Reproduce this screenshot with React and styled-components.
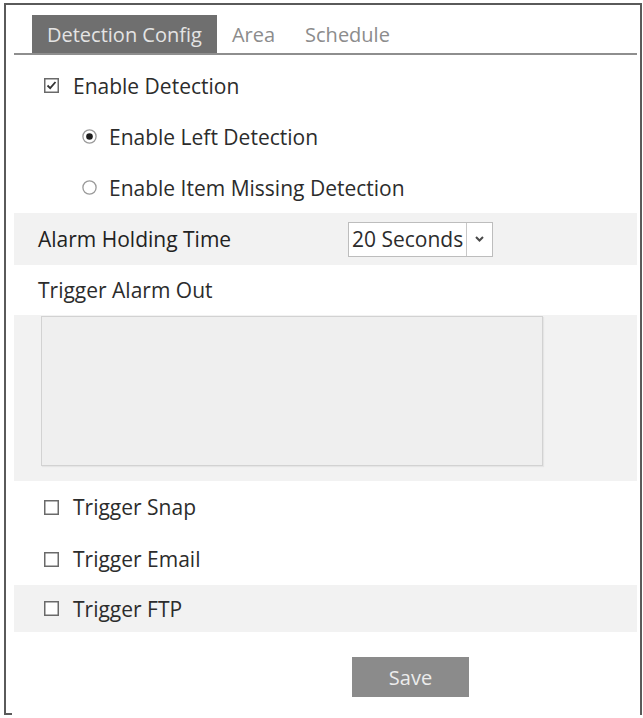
import styled, { createGlobalStyle } from "styled-components";

const GlobalStyle = createGlobalStyle`
  html, body {
    margin: 0;
    padding: 0;
    background: #fff;
  }
  body {
    font-family: "Open Sans", "Noto Sans", sans-serif;
    color: #2c2c2c;
  }
`;

const Frame = styled.div`
  box-sizing: border-box;
  display: flex;
  flex-direction: column;
  width: 638px;
  height: 712px;
  margin: 3px 0 0 4px;
  padding: 0 3px 0 8px;
  border: 2px solid #5a5a5a;
  border-bottom: none;
`;

const TabBar = styled.div`
  display: flex;
  align-items: stretch;
  margin-top: 10px;
  padding-left: 18px;
  border-bottom: 2px solid #8e8e8e;
`;

const Tab = styled.div`
  height: 38px;
  display: flex;
  align-items: center;
  padding: 0 15px;
  font-size: 20px;
  color: ${({ active }) => (active ? "#e4e4e4" : "#8c8c8c")};
  background: ${({ active }) => (active ? "#6f6f6f" : "transparent")};
`;

const Row = styled.div`
  display: flex;
  align-items: center;
  height: ${({ h }) => h || 51}px;
  padding-left: ${({ indent }) => indent || 0}px;
  background: ${({ shaded }) => (shaded ? "#f2f2f2" : "transparent")};
  font-size: 21px;
  color: #2c2c2c;
`;

const FirstRow = styled(Row)`
  margin-top: 5px;
`;

const Label = styled.span`
  white-space: nowrap;
  margin-left: ${({ gap }) => gap || 0}px;
`;

const FieldLabel = styled.span`
  width: 310px;
  white-space: nowrap;
  color: #222;
  font-weight: 500;
`;

const Select = styled.div`
  box-sizing: border-box;
  display: flex;
  width: 145px;
  height: 35px;
  border: 1px solid #bdbdbd;
  background: #fff;
`;

const SelectValue = styled.div`
  flex: 1;
  display: flex;
  align-items: center;
  padding-left: 3px;
  font-size: 21px;
  color: #2c2c2c;
  white-space: nowrap;
  overflow: hidden;
`;

const SelectArrow = styled.div`
  width: 25px;
  display: flex;
  align-items: center;
  justify-content: center;
  border-left: 1px solid #c8c8c8;
`;

const AlarmBand = styled.div`
  padding: 1px 0 15px 27px;
  background: #f2f2f2;
`;

const AlarmList = styled.div`
  box-sizing: border-box;
  width: 502px;
  height: 150px;
  background: #efefef;
  border: 1px solid #d2d2d2;
  box-shadow: 1px 1px 1px rgba(0, 0, 0, 0.05);
`;

const Footer = styled.div`
  display: flex;
  padding-left: 338px;
  margin-top: 25px;
`;

const SaveButton = styled.button`
  width: 117px;
  height: 40px;
  border: none;
  background: #8b8b8b;
  color: #ececec;
  font-family: "Open Sans", "Noto Sans", sans-serif;
  font-size: 20px;
  padding: 0;
`;

const Foot = styled.div`
  margin-top: auto;
  margin-left: -10px;
  width: 8px;
  height: 2px;
  background: #5a5a5a;
`;

function CheckBox({ checked }) {
  return (
    <svg width="15" height="15" viewBox="0 0 15 15" style={{ flexShrink: 0 }}>
      <rect x="0.75" y="0.75" width="13.5" height="13.5" fill="#fff" stroke="#6a6a6a" strokeWidth="1.5" />
      {checked && (
        <polyline points="3.5,7.5 6.2,10.2 11.5,4" fill="none" stroke="#333" strokeWidth="1.8" />
      )}
    </svg>
  );
}

function Radio({ checked }) {
  return (
    <svg width="15" height="15" viewBox="0 0 15 15" style={{ flexShrink: 0 }}>
      <circle cx="7.5" cy="7.5" r="6.6" fill="#fff" stroke="#9a9a9a" strokeWidth="1.3" />
      {checked && <circle cx="7.5" cy="7.5" r="3.3" fill="#1e1e1e" />}
    </svg>
  );
}

function Chevron() {
  return (
    <svg width="9" height="6" viewBox="0 0 9 6">
      <polyline points="1,1 4.5,4.5 8,1" fill="none" stroke="#4a4a4a" strokeWidth="2" />
    </svg>
  );
}

export default function App() {
  return (
    <>
      <GlobalStyle />
      <Frame>
        <TabBar>
          <Tab active>Detection Config</Tab>
          <Tab>Area</Tab>
          <Tab>Schedule</Tab>
        </TabBar>

        <FirstRow indent={30}>
          <CheckBox checked />
          <Label gap={14}>Enable Detection</Label>
        </FirstRow>
        <Row indent={68}>
          <Radio checked />
          <Label gap={12}>Enable Left Detection</Label>
        </Row>
        <Row indent={68}>
          <Radio />
          <Label gap={12}>Enable Item Missing Detection</Label>
        </Row>

        <Row shaded h={52} indent={24}>
          <FieldLabel>Alarm Holding Time</FieldLabel>
          <Select>
            <SelectValue>20 Seconds</SelectValue>
            <SelectArrow>
              <Chevron />
            </SelectArrow>
          </Select>
        </Row>

        <Row h={50} indent={24}>
          <Label>Trigger Alarm Out</Label>
        </Row>
        <AlarmBand>
          <AlarmList />
        </AlarmBand>

        <Row h={52} indent={30}>
          <CheckBox />
          <Label gap={14}>Trigger Snap</Label>
        </Row>
        <Row h={52} indent={30}>
          <CheckBox />
          <Label gap={14}>Trigger Email</Label>
        </Row>
        <Row shaded h={47} indent={30}>
          <CheckBox />
          <Label gap={14}>Trigger FTP</Label>
        </Row>

        <Footer>
          <SaveButton>Save</SaveButton>
        </Footer>
        <Foot />
      </Frame>
    </>
  );
}
